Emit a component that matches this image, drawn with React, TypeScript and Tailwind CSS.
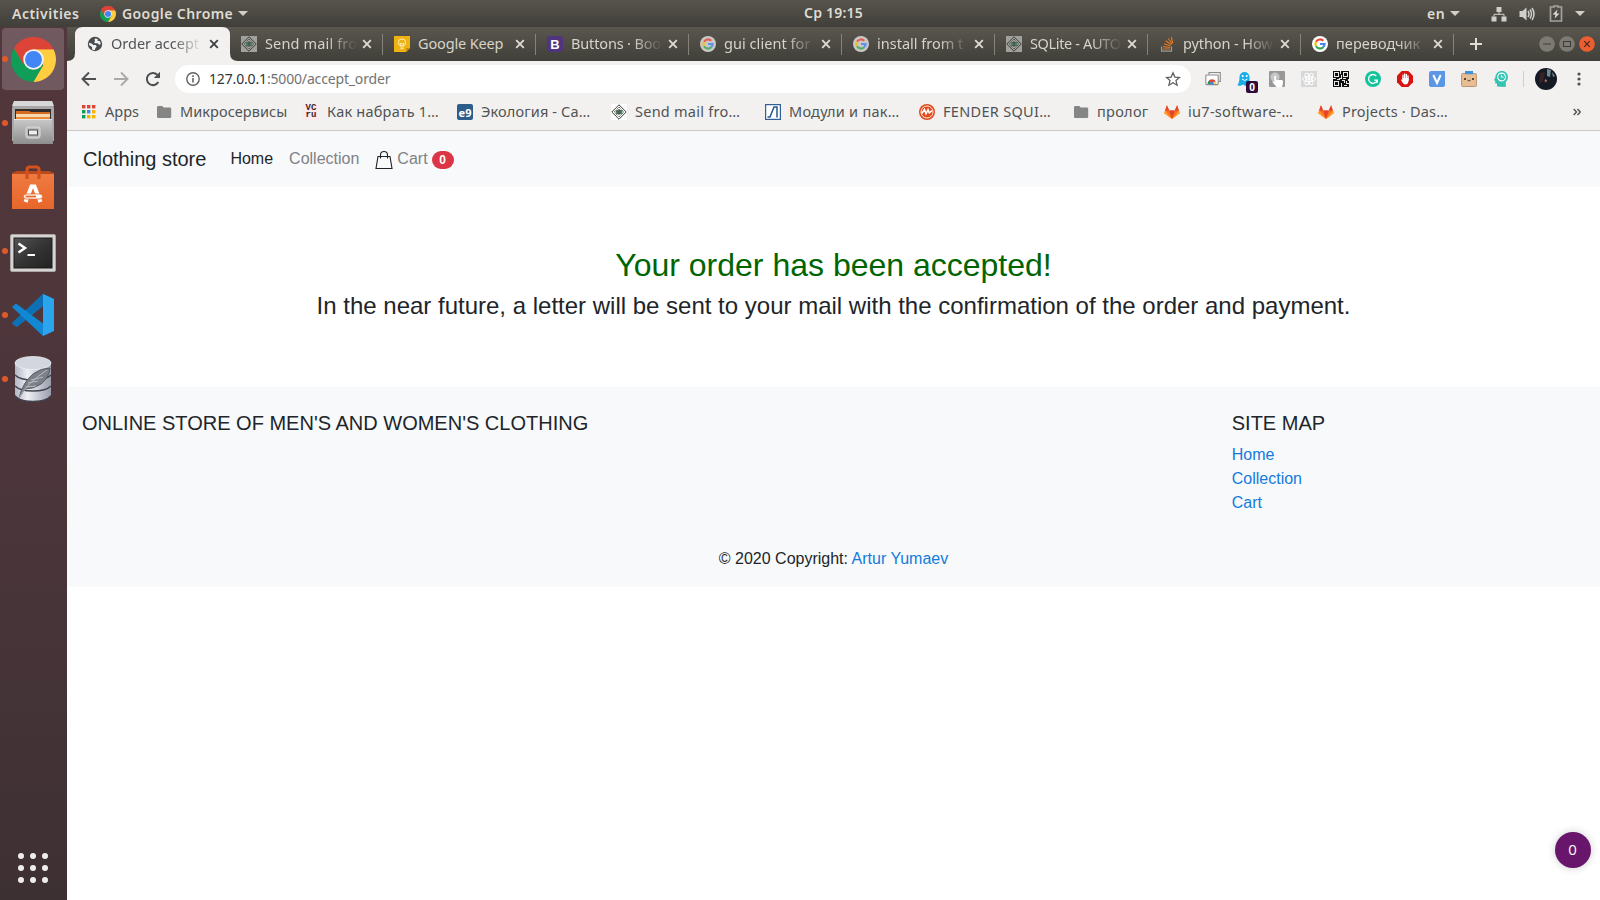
import type { ReactNode } from 'react';

const ui = "font-['Noto_Sans',sans-serif]";

function Chrome({ className }: { className: string }) {
  return (
    <svg viewBox="0 0 48 48" className={className}>
      <path d="M24 24L3.2 12A24 24 0 0 1 44.8 12Z" fill="#db4437" />
      <path d="M24 24L3.2 12A24 24 0 0 0 24 48L34.4 30Z" fill="#0f9d58" />
      <path d="M24 13H45.3A24 24 0 0 1 24 48L34.4 30Z" fill="#ffcd40" />
      <path d="M3.2 12A24 24 0 0 1 45.3 13H24L13.6 30Z" fill="#db4437" />
      <circle cx="24" cy="24" r="11" fill="#f1f1f1" />
      <circle cx="24" cy="24" r="9" fill="#4285f4" />
    </svg>
  );
}

function Google({ dim }: { dim?: boolean }) {
  return (
    <svg viewBox="0 0 16 16" className="size-4">
      <circle cx="8" cy="8" r="8" fill={dim ? '#c9c8c5' : '#fff'} />
      <g fill="none" strokeWidth="2.2" opacity={dim ? 0.8 : 1}>
        <path d="M11.3 4.8A4.6 4.6 0 0 0 4 5.8" stroke="#ea4335" />
        <path d="M4 5.8A4.6 4.6 0 0 0 4 10.2" stroke="#fbbc05" />
        <path d="M4 10.2A4.6 4.6 0 0 0 11 11.4" stroke="#34a853" />
        <path d="M11 11.4A4.6 4.6 0 0 0 12.6 8H8" stroke="#4285f4" />
      </g>
    </svg>
  );
}

function Diamond({ bg, fg = '#3c3f3e' }: { bg: string; fg?: string }) {
  return (
    <svg viewBox="0 0 16 16" className="size-4">
      <rect width="16" height="16" fill={bg} />
      <path d="M8 .8L15.2 8L8 15.2L.8 8Z" fill="none" stroke={fg} />
      <path d="M8 3L13 8L8 13L3 8Z" fill="none" stroke={fg} strokeWidth=".8" strokeDasharray="1.4 .7" />
      <ellipse cx="8" cy="8" rx="3.5" ry="2.5" fill="#5a8a6c" />
      <path d="M5 7h6M5.5 9.2h5M8 5v6" stroke={fg} strokeWidth=".7" />
    </svg>
  );
}

const Globe = () => (
  <svg viewBox="0 0 16 16" className="size-4">
    <circle cx="8" cy="8" r="7.2" fill="#4a4d50" />
    <path d="M8.2 2.4l2.6.5-.4 1.5 2.8 1.2.5 2.6-1.6.6-1.4-1.5H8.3L7 6.4l1.2-1.5L7.4 4z" fill="#f2f1f0" />
    <path d="M1.9 7l2.3.2L6.4 9l2.3.1 1 1.5-1.5 1.8-.4 1.8-2.7-.7L5 11 2.3 9.2z" fill="#f2f1f0" />
  </svg>
);

const Keep = () => (
  <svg viewBox="0 0 16 16" className="size-4">
    <path d="M0 0H16V12L12 16H0Z" fill="#eeb211" />
    <path d="M12 16V12H16Z" fill="#c98f00" />
    <circle cx="8" cy="6.5" r="3.6" fill="none" stroke="#fbeebd" strokeWidth="1" />
    <path d="M6.3 11h3.4M6.5 12.6h3M7 9.6l-.8-2.4L8 7.9 9.8 7.2 9 9.6" fill="none" stroke="#fbeebd" strokeWidth=".9" />
  </svg>
);

const Boot = () => (
  <span className="flex size-4 items-center justify-center rounded-[3px] bg-[#51347f] font-['Liberation_Sans',sans-serif] text-[13px] leading-none font-bold text-white">B</span>
);

const Stack = () => (
  <svg viewBox="0 0 16 16" className="size-4">
    <path d="M2.6 10.5V15.2H12.5V10.5" fill="none" stroke="#9b9a96" strokeWidth="1.3" />
    <path d="M4 13h7M4.2 10.6l7 .9M5 7.8l6.5 2.1M6.7 4.7l5.6 4M9.3 2.5l3.9 5.4M12.3 1l1.5 6" stroke="#e87922" strokeWidth="1.1" />
  </svg>
);

const Gitlab = () => (
  <svg viewBox="0 0 16 16" className="size-4">
    <path d="M8 15L.2 9.2 2.9 1.2 5.2 6.5H10.8L13.1 1.2 15.8 9.2Z" fill="#fc6d26" />
    <path d="M8 15L5.2 6.5H10.8Z" fill="#e24329" />
    <path d="M2.9 1.2L5.2 6.5H1.1ZM13.1 1.2L10.800 6.5H14.9Z" fill="#e24329" />
    <path d="M8 15L.2 9.2 1.1 6.5ZM8 15L15.8 9.2 14.9 6.5Z" fill="#fca326" />
  </svg>
);

const Folder = () => (
  <svg viewBox="0 0 16 16" className="size-4">
    <path d="M2 2H6.2L7.7 3.6H14A1.2 1.2 0 0 1 15.2 4.8V12.8A1.2 1.2 0 0 1 14 14H2.2A1.2 1.2 0 0 1 1 12.8V3.2A1.2 1.2 0 0 1 2 2Z" fill="#858585" />
  </svg>
);

const fade = '[mask-image:linear-gradient(to_right,black_62px,transparent_92px)]';

const tabs: { icon: ReactNode; text: string; cls: string }[] = [
  { icon: <Globe />, text: 'Order accept', cls: `tracking-[-0.02px] ${fade}` },
  { icon: <Diamond bg="#a1a09b" />, text: 'Send mail fro', cls: `tracking-[0.15px] ${fade}` },
  { icon: <Keep />, text: 'Google Keep', cls: 'tracking-[-0.15px]' },
  { icon: <Boot />, text: 'Buttons · Boo', cls: `-tracking-[0.15px] ${fade}` },
  { icon: <Google dim />, text: 'gui client for', cls: `tracking-[0.05px] ${fade}` },
  { icon: <Google dim />, text: 'install from t', cls: `tracking-[0px] ${fade}` },
  { icon: <Diamond bg="#a1a09b" />, text: 'SQLite - AUTO', cls: `tracking-[-0.35px] ${fade}` },
  { icon: <Stack />, text: 'python - How', cls: `tracking-[-0.1px] ${fade}` },
  { icon: <Google />, text: 'переводчик', cls: `tracking-[0.05px] ${fade}` },
];

function Tab({ icon, text, cls, active }: { icon: ReactNode; text: string; cls: string; active: boolean }) {
  return (
    <div className={`relative flex h-[34px] w-[153px] shrink-0 items-center pl-[11px] ${active ? 'text-[#505354]' : 'text-[#d6d3cb]'}`}>
      {active && (
        <svg viewBox="0 0 171 34" className="absolute top-0 -left-[10px] h-[34px] w-[171px]">
          <path d="M0 34Q8 34 8 26V8Q8 0 16 0H155Q163 0 163 8V26Q163 34 171 34Z" fill="#f2f1f0" />
        </svg>
      )}
      <span className={`relative ${active ? '-ml-px' : ''}`}>{icon}</span>
      <span className={`relative ml-2 w-[92px] pb-[2px] text-[14.5px] leading-5 whitespace-nowrap ${cls}`}>{text}</span>
      <svg viewBox="0 0 10 10" className={`relative size-[10px] ${active ? 'ml-[6px]' : 'ml-[5px]'}`}>
        <path d="M1.2 1.2L8.8 8.8M8.8 1.2L1.2 8.8" stroke={active ? '#3f4244' : '#dddad2'} strokeWidth="1.9" />
      </svg>
      {!active && <i className="absolute top-[7px] right-0 h-[21px] w-px bg-[#85827a]" />}
    </div>
  );
}

function Bookmark({ icon, text, w, cls = '' }: { icon: ReactNode; text: string; w: string; cls?: string }) {
  return (
    <div className={`flex shrink-0 items-center gap-2 whitespace-nowrap ${w}`}>
      {icon}
      <span className={`pb-px ${cls}`}>{text}</span>
    </div>
  );
}

const AppsIcon = () => (
  <svg viewBox="0 0 14 14" className="mr-px size-[14px]">
    {['#db4437', '#db4437', '#db4437', '#0f9d58', '#4285f4', '#f4b400', '#0f9d58', '#f4b400', '#f4b400'].map((c, i) => (
      <rect key={i} x={(i % 3) * 5} y={Math.floor(i / 3) * 5} width="3.4" height="3.4" fill={c} />
    ))}
  </svg>
);

const Vc = () => (
  <span className="flex size-4 flex-col items-center justify-center bg-[#fbe9ec] font-['Liberation_Mono',monospace] text-[9px] leading-[7px] font-bold text-[#3a2326]">
    <span>VC</span>
    <span>ru</span>
  </span>
);

const E9 = () => (
  <span className="flex size-4 items-center justify-center rounded-[2px] bg-[#2d5d8b] text-[11px] leading-none font-bold text-white">e9</span>
);

const Modules = () => (
  <svg viewBox="0 0 16 16" className="size-4">
    <rect x=".6" y=".6" width="14.8" height="14.8" fill="#fff" stroke="#2f5f94" strokeWidth="1.2" />
    <path d="M2.500 13H5L9 3H12V13.5" fill="none" stroke="#24588f" strokeWidth="1.5" />
  </svg>
);

const Fender = () => (
  <svg viewBox="0 0 16 16" className="size-4">
    <circle cx="8" cy="8" r="8" fill="#e04a1c" />
    <circle cx="8" cy="8" r="6" fill="none" stroke="#fff" strokeWidth=".9" />
    <path d="M2.8 9.5L5.5 5.5L7 9.8L9 5.8L10.3 9L13 6.5" fill="none" stroke="#fff" strokeWidth="1.6" />
  </svg>
);

const Extensions = () => (
  <div className="flex items-center gap-4">
    <svg viewBox="0 0 16 16" className="size-4">
      <path d="M4 5V1.5H15.3V10.5H13" fill="#eee" stroke="#8d8d8d" strokeWidth="1.1" />
      <rect x=".8" y="4" width="12.4" height="9.6" rx=".8" fill="#fff" stroke="#8d8d8d" strokeWidth="1.1" />
      <path d="M2.5 13A4.5 4.5 0 0 1 4.2 9.4L7 13Z" fill="#0f9d58" />
      <path d="M3.3 10.4A4.5 4.5 0 0 1 10.8 10.2L7 12Z" fill="#db4437" />
      <path d="M10.8 10.2A4.5 4.5 0 0 1 11.5 13H7Z" fill="#ffcd40" />
      <circle cx="7" cy="12.4" r="1.7" fill="#4285f4" />
    </svg>
    <span className="relative">
      <svg viewBox="0 0 16 16" className="size-4">
        <path d="M2.5 6A5 5 0 0 1 12.5 6V14L10.5 13 8.5 15 6 13.5 3 15 .3 14.2Q2.5 12 2.5 6Z" fill="#16aee8" />
        <circle cx="5.7" cy="5" r="1.1" fill="#fff" />
        <circle cx="9.7" cy="5" r="1.1" fill="#fff" />
        <path d="M5 8Q7.7 11 10.4 8" stroke="#fff" fill="none" />
      </svg>
      <span className="absolute top-[10px] left-[9px] flex h-3 w-3 items-center justify-center rounded-[2px] bg-[#300a38] text-[10px] leading-none font-bold text-white">0</span>
    </span>
    <svg viewBox="0 0 16 16" className="size-4">
      <rect width="16" height="16" rx="1" fill="#989898" />
      <circle cx="6" cy="6" r="4.6" fill="#c5c5c5" />
      <path d="M5.3 5Q6.2 4 7 5V9H13Q14.5 9.5 14 12L13 16H7.5L3.3 11Q4 9.5 5.3 10.8Z" fill="#fff" />
    </svg>
    <svg viewBox="0 0 16 16" className="size-4">
      <rect width="16" height="16" fill="#d8d8d8" />
      <g fill="none" stroke="#fff" strokeWidth="1">
        <ellipse cx="8" cy="8" rx="6.5" ry="2.5" />
        <ellipse cx="8" cy="8" rx="6.5" ry="2.5" transform="rotate(60 8 8)" />
        <ellipse cx="8" cy="8" rx="6.5" ry="2.5" transform="rotate(120 8 8)" />
      </g>
      <circle cx="8" cy="8" r="1.4" fill="#fff" />
    </svg>
    <svg viewBox="0 0 16 16" className="size-4" shapeRendering="crispEdges">
      <rect width="16" height="16" fill="#111" />
      <path d="M1.5 1.5h4v4h-4zM10.5 1.5h4v4h-4zM1.5 10.5h4v4h-4z" fill="none" stroke="#e8e8e8" strokeWidth="1" />
      <path d="M7.5 0V3M8.500 4V7H6M0 7.5H3M4 8.500H7M10 7.500H13M15.500 8V10M8.500 9.500H11V12M8.500 12V15.5M13.500 10V12.5H15.5M11 14.500H14" stroke="#e8e8e8" strokeWidth="1" fill="none" />
    </svg>
    <svg viewBox="0 0 16 16" className="size-4">
      <circle cx="8" cy="8" r="8" fill="#15c39a" />
      <path d="M11.3 5A4.4 4.4 0 1 0 12.2 9.2H9.2M12.2 9.2V12" fill="none" stroke="#fff" strokeWidth="1.3" />
    </svg>
    <svg viewBox="0 0 16 16" className="size-4">
      <path d="M4.7 0H11.3L16 4.7V11.3L11.3 16H4.7L0 11.3V4.7Z" fill="#d9130f" />
      <path d="M6 8V4.2M7.7 8V3M9.4 8V3.4M11 9V4.8" stroke="#fff" strokeWidth="1.3" strokeLinecap="round" />
      <path d="M5.4 7H11.6V10Q11 13.5 8.3 13.5Q6.3 13.5 4.3 9.5Q3.8 8.3 5.4 8.7Z" fill="#fff" />
    </svg>
    <svg viewBox="0 0 16 16" className="size-4">
      <path d="M1.5 0H16V14.5L14.5 16H1.5L0 14.5V1.5Z" fill="#5b97e5" />
      <path d="M4.3 4L8 12L11.7 4" fill="none" stroke="#fff" strokeWidth="2" />
    </svg>
    <svg viewBox="0 0 16 16" className="size-4">
      <rect x=".6" y="2.5" width="14.8" height="13" rx="1" fill="#e8bd91" stroke="#b99672" />
      <rect x="4" y="0" width="8" height="3.200" fill="#3b94dd" />
      <circle cx="4" cy="8" r="1" fill="#222" />
      <circle cx="12" cy="8" r="1" fill="#222" />
      <path d="M6.5 9.2Q7.3 10.4 8 9.2Q8.7 10.4 9.5 9.2" fill="none" stroke="#222" strokeWidth=".9" />
    </svg>
    <svg viewBox="0 0 16 16" className="size-4">
      <path d="M4 15.5V12.5H2.2V9.8L1 9.2L2.3 6.5A6.2 6.2 0 0 1 15 6Q15 9 12.800 11V16Z" fill="#34c3b0" />
      <circle cx="8.600" cy="6" r="3.9" fill="none" stroke="#fff" strokeWidth="1.1" />
      <path d="M8.400 3.8V6.2H10.5" fill="none" stroke="#fff" />
    </svg>
  </div>
);

const Files = () => (
  <svg viewBox="0 0 44 46" className="h-[46px] w-11">
    <defs>
      <linearGradient id="cab" x1="0" y1="0" x2="0" y2="1"><stop offset="0" stopColor="#c9c9c9" /><stop offset="1" stopColor="#8e8e8e" /></linearGradient>
    </defs>
    <path d="M3 1H41L43 8V41H1V8Z" fill="#a7a7a7" />
    <path d="M3 1H41L43 6H1Z" fill="#d8d8d8" />
    <path d="M4 9H40V20H4Z" fill="#302d2c" />
    <path d="M5 11H18L20 12H39V20H5Z" fill="#d66b22" />
    <path d="M5 14H39V17H5Z" fill="#f7d9b2" />
    <path d="M5 17H39V20H5Z" fill="#ec8a35" />
    <path d="M3 19H41L42 44H2Z" fill="url(#cab)" />
    <path d="M3 19.5H41" stroke="#e6e6e6" />
    <rect x="15" y="27" width="14" height="11" rx="2" fill="#bbb" stroke="#ddd" />
    <rect x="17.5" y="30" width="9" height="5" fill="#eee" stroke="#4b4b4b" />
  </svg>
);

const Software = () => (
  <svg viewBox="0 0 44 46" className="h-[46px] w-11">
    <defs>
      <linearGradient id="bag" x1="0" y1="0" x2="0" y2="1"><stop offset="0" stopColor="#ee7a42" /><stop offset="1" stopColor="#e8662a" /></linearGradient>
    </defs>
    <path d="M1 8L6 6H38L43 8V10H1Z" fill="#b84a1b" />
    <rect x="1" y="9" width="42" height="35" fill="url(#bag)" />
    <path d="M16 14V5Q16 2 19 2H25Q28 2 28 5V14" fill="none" stroke="#d4511c" strokeWidth="3.2" />
    <path d="M14.500 37L20.500 21.500H23.500L29.500 37" fill="none" stroke="#fff" strokeWidth="4" />
    <rect x="12.500" y="29" width="19" height="5" rx="2.500" fill="#fff" stroke="#e8662a" strokeWidth=".8" />
    <path d="M14.500 31.500H25" stroke="#e8662a" strokeWidth="1.800" />
  </svg>
);

const Terminal = () => (
  <svg viewBox="0 0 46 38" className="h-[38px] w-[46px]">
    <defs>
      <linearGradient id="term" x1="0" y1="0" x2="1" y2="1"><stop offset="0" stopColor="#555" /><stop offset=".5" stopColor="#343434" /><stop offset="1" stopColor="#222" /></linearGradient>
    </defs>
    <rect x=".5" y=".5" width="45" height="37" rx="1.500" fill="#d6d4d2" stroke="#aaa6a5" />
    <rect x="4" y="4" width="38" height="30" fill="url(#term)" stroke="#1b1b1b" />
    <path d="M8.500 9.500L15 14L8.500 18.500" fill="none" stroke="#fff" strokeWidth="2.500" />
    <path d="M17.500 21H25" stroke="#fff" strokeWidth="2" />
  </svg>
);

const Code = () => (
  <svg viewBox="0 0 44 44" className="size-11">
    <path d="M1 30L32 1L43 6V13L32 13L6 34Z" fill="#0f76bd" />
    <path d="M1 30L5 34L32 13V1L11 21Z" fill="#0d70b5" />
    <path d="M1 14L5 10.500L34 32L32 43Z" fill="#1288d4" />
    <path d="M32 1L43 6V38L32 43Z" fill="#2ba5ee" />
  </svg>
);

const Sqlite = () => (
  <svg viewBox="0 0 38 48" className="h-12 w-[38px]">
    <defs>
      <linearGradient id="cyl" x1="0" y1="0" x2="1" y2="0"><stop offset="0" stopColor="#b4b6c4" /><stop offset=".35" stopColor="#eeeff5" /><stop offset="1" stopColor="#9a9dac" /></linearGradient>
    </defs>
    <path d="M1 8V40Q5 46 19 46Q33 46 37 40V8Z" fill="url(#cyl)" />
    <ellipse cx="19" cy="8" rx="18" ry="6.500" fill="#d3d5df" stroke="#eceef4" strokeWidth=".8" />
    <path d="M1 20Q6 25 19 25Q32 25 37 20M1 31Q6 36 19 36Q32 36 37 31M1 41Q6 46.500 19 46.500Q32 46.500 37 41" fill="none" stroke="#41454f" strokeWidth="1.500" />
    <path d="M5 43Q9 27 19 19Q27 13 36 13Q35 23 27 29Q20 34 11 34Z" fill="#7b7f88" stroke="#575b63" />
    <path d="M5 43Q13 28 33 15M14 28L24 26M17 25L29 22M12 32L22 31" fill="none" stroke="#b8bbc4" strokeWidth="1" />
  </svg>
);

function DockItem({ children, active, dot = true }: { children: ReactNode; active?: boolean; dot?: boolean }) {
  return (
    <div className="relative flex h-16 w-[67px] items-center pl-[2px]">
      <div className={`flex h-[62px] w-[62px] items-center justify-center rounded-[4px] ${active ? 'bg-[#705a5f]' : ''}`}>{children}</div>
      {dot && <i className="absolute top-[29px] left-[2px] size-[6px] rounded-full bg-[#e1582b]" />}
    </div>
  );
}

const Caret = () => <i className="block h-0 w-0 border-x-[5px] border-t-[5px] border-x-transparent border-t-[#d0cfca]" />;

export default function App() {
  return (
    <div className={`flex h-[900px] w-[1600px] flex-col overflow-hidden bg-white ${ui}`}>
      <header className="grid h-[27px] shrink-0 grid-cols-3 items-center bg-linear-to-b from-[#57544c] to-[#413f3a] text-[14px] font-semibold text-[#dfdbd2]">
        <div className="flex items-center pl-3">
          <span className="w-[88px] tracking-[0.5px]">Activities</span>
          <Chrome className="size-4" />
          <span className="mr-[5px] ml-[6px] w-[111px] tracking-[0.4px] whitespace-nowrap">Google Chrome</span>
          <Caret />
        </div>
        <div className="pb-[2px] pl-[67px] text-center tracking-[0.2px]">Ср 19:15</div>
        <div className="flex items-center justify-end pr-[15px]">
          <span className="mr-[5px] tracking-[0.4px]">en</span>
          <Caret />
          <svg viewBox="0 0 16 16" className="ml-[31px] size-4" fill="#d0cfca">
            <path d="M5.500 1h5v5h-5zM0.500 10.500h5v5h-5zM10.500 10.500h5v5h-5z" />
            <path d="M8 6V8.300M3 10.500V8.300H13V10.500" fill="none" stroke="#d0cfca" />
          </svg>
          <svg viewBox="0 0 16 16" className="ml-3 size-4" fill="#d0cfca">
            <path d="M.5 5H3.500L7.500 1.500V14.500L3.500 11H.5Z" />
            <path d="M9 5Q11 8 9 11M11 3.500Q14 8 11 12.500M13 2Q17 8 13 14" fill="none" stroke="#d0cfca" strokeWidth="1.500" />
          </svg>
          <svg viewBox="0 0 14 17" className="ml-[14px] h-[17px] w-[14px]">
            <path d="M5 2V1H9V2H12.500V16H1.500V2Z" fill="none" stroke="#a3a29c" strokeWidth="1.700" />
            <path d="M8.500 4.500L3.500 9.500H6.500L5.500 13.500L10.500 8.500H7.500Z" fill="#deddda" />
          </svg>
          <span className="ml-3"><Caret /></span>
        </div>
      </header>

      <div className="flex min-h-0 flex-1">
        <aside className="flex w-[67px] shrink-0 flex-col bg-linear-to-b from-[#52373c] via-[#4c363b] to-[#3d3033]">
          <DockItem active><Chrome className="size-[45px]" /></DockItem>
          <DockItem><Files /></DockItem>
          <DockItem dot={false}><span className="pt-px"><Software /></span></DockItem>
          <DockItem><span className="pt-[3px]"><Terminal /></span></DockItem>
          <DockItem><Code /></DockItem>
          <DockItem><Sqlite /></DockItem>
          <div className="mt-auto grid grid-cols-3 gap-[6px] self-start pb-[17px] pl-[18px]">
            {Array.from({ length: 9 }, (_, i) => <i key={i} className="size-[6px] rounded-full bg-[#f0eeed]" />)}
          </div>
        </aside>

        <div className="relative flex min-w-0 flex-1 flex-col">
          <div className="flex h-[34px] shrink-0 items-center bg-linear-to-b from-[#5a574f] to-[#403f39] pl-[10px]">
            {tabs.map((t, i) => <Tab key={t.text} {...t} active={i === 0} />)}
            <svg viewBox="0 0 12 12" className="ml-4 size-3"><path d="M6 0V12M0 6H12" stroke="#e0ddd5" strokeWidth="2" /></svg>
            <div className="ml-auto flex gap-1 pr-[5px]">
              <svg viewBox="0 0 16 16" className="size-4"><circle cx="8" cy="8" r="7.800" fill="#7d7a73" /><path d="M4 8H12" stroke="#3c3b37" /></svg>
              <svg viewBox="0 0 16 16" className="size-4"><circle cx="8" cy="8" r="7.800" fill="#7d7a73" /><rect x="4.500" y="5.500" width="7" height="5" fill="none" stroke="#3c3b37" /></svg>
              <svg viewBox="0 0 16 16" className="size-4"><circle cx="8" cy="8" r="7.800" fill="#ec5e30" /><path d="M5.200 5.200L10.800 10.800M10.800 5.200L5.200 10.800" stroke="#45281d" strokeWidth="1.200" /></svg>
            </div>
          </div>

          <div className="flex h-9 shrink-0 items-center bg-[#f2f1f0] pl-[14px]">
            <svg viewBox="0 0 16 16" className="size-4" fill="none" stroke="#4d4f51" strokeWidth="1.900"><path d="M15 8H2M8 1.500L1.500 8L8 14.500" /></svg>
            <svg viewBox="0 0 16 16" className="ml-4 size-4" fill="none" stroke="#a9a9a8" strokeWidth="1.900"><path d="M1 8H14M8 1.500L14.500 8L8 14.500" /></svg>
            <svg viewBox="0 0 16 16" className="ml-4 size-4"><path d="M13.300 11A6.100 6.100 0 1 1 12.300 3.700" fill="none" stroke="#4d4f51" strokeWidth="2" /><path d="M15 .8V7H8.800Z" fill="#4d4f51" /></svg>
            <div className="ml-[14px] flex h-7 w-[1016px] items-center rounded-full bg-white pr-[10px] pl-[11px] text-[14px]">
              <svg viewBox="0 0 14 14" className="size-[14px]"><circle cx="7" cy="7" r="6.200" fill="none" stroke="#5f6163" strokeWidth="1.400" /><path d="M7 6V10.500M7 3.300V4.900" stroke="#5f6163" strokeWidth="1.600" /></svg>
              <span className="ml-[9px] pb-px tracking-[-0.16px] text-[#333]">127.0.0.1<span className="text-[#737373]">:5000/accept_order</span></span>
              <svg viewBox="0 0 16 16" className="ml-auto size-4"><path d="M8 1.800L9.900 6.100L14.500 6.500L11 9.600L12.100 14.200L8 11.700L3.900 14.200L5 9.600L1.500 6.500L6.100 6.100Z" fill="none" stroke="#5f6163" strokeWidth="1.300" /></svg>
            </div>
            <div className="ml-[14px]"><Extensions /></div>
            <i className="ml-[14px] h-4 w-px bg-[#cfcfcf]" />
            <svg viewBox="0 0 22 22" className="ml-[11px] size-[22px]">
              <circle cx="11" cy="11" r="11" fill="#151b24" />
              <path d="M12 1L16 2L15 9L12 8ZM17 4L20 8L18 9Z" fill="#6f8a93" />
              <path d="M5 5L10 4L8 13L4 16Z" fill="#3a2225" />
              <path d="M10.500 11L12 12.500L11 14.500L9.500 13Z" fill="#c9704c" />
            </svg>
            <svg viewBox="0 0 4 14" className="ml-5 h-[14px] w-1" fill="#4d4f51"><circle cx="2" cy="2" r="1.600" /><circle cx="2" cy="7" r="1.600" /><circle cx="2" cy="12" r="1.600" /></svg>
          </div>

          <div className="flex h-[34px] shrink-0 items-center border-b border-[#c9c9c8] bg-[#f2f1f0] pb-[3px] pl-[15px] text-[14.500px] text-[#505354]">
            <Bookmark icon={<AppsIcon />} text="Apps" w="w-[74px]" />
            <Bookmark icon={<Folder />} text="Микросервисы" w="w-[147px]" cls="tracking-[0.08px]" />
            <Bookmark icon={<Vc />} text="Как набрать 1…" w="w-[154px]" cls="tracking-[0.22px]" />
            <Bookmark icon={<E9 />} text="Экология - Са…" w="w-[154px]" cls="tracking-[0.15px]" />
            <Bookmark icon={<Diamond bg="#fff" />} text="Send mail fro…" w="w-[154px]" cls="tracking-[0.25px]" />
            <Bookmark icon={<Modules />} text="Модули и пак…" w="w-[154px]" cls="tracking-[0.25px]" />
            <Bookmark icon={<Fender />} text="FENDER SQUI…" w="w-[154px]" cls="tracking-[0.3px]" />
            <Bookmark icon={<Folder />} text="пролог" w="w-[91px]" cls="tracking-[0.3px]" />
            <Bookmark icon={<Gitlab />} text="iu7-software-…" w="w-[154px]" cls="tracking-[0.3px]" />
            <Bookmark icon={<Gitlab />} text="Projects · Das…" w="w-[154px]" cls="tracking-[0.2px]" />
            <svg viewBox="0 0 8 8" className="mr-[19px] ml-auto size-2" fill="none" stroke="#4d4f51" strokeWidth="1.400"><path d="M.7 1L3.500 4L.7 7M4.500 1L7.300 4L4.500 7" /></svg>
          </div>

          <div className="flex flex-1 flex-col font-['Liberation_Sans',Arial,sans-serif] text-base text-[#212529]">
            <nav className="flex h-14 shrink-0 items-center bg-[#f7f9fb] pl-4">
              <span className="mr-4 text-xl">Clothing store</span>
              <span className="px-2">Home</span>
              <span className="px-2 text-[#808285]">Collection</span>
              <span className="flex items-center px-2 text-[#808285]">
                <svg viewBox="0 0 18 20" className="mt-[2px] mr-1 h-5 w-[18px]" fill="none" stroke="#222" strokeWidth="1.100"><path d="M3 6.500H15L17 18.500H1ZM5.500 8.500V5Q5.500 1.500 9 1.500Q12.500 1.500 12.500 5V8.500" /></svg>
                Cart
                <span className="mt-[2px] ml-1 flex h-[18px] w-[22px] items-center justify-center rounded-full bg-[#dc3545] text-xs font-bold text-white">0</span>
              </span>
            </nav>
            <main className="flex h-[200px] shrink-0 flex-col items-center pt-[59px]">
              <h2 className="text-[32px] leading-[38px] text-[#006400]">Your order has been accepted!</h2>
              <h4 className="mt-[7px] text-2xl leading-[29px]">In the near future, a letter will be sent to your mail with the confirmation of the order and payment.</h4>
            </main>
            <footer className="flex h-[200px] shrink-0 flex-col bg-[#f7f9fb] pt-6">
              <div className="flex h-[119px] pl-[15px]">
                <h5 className="w-[1149.75px] text-xl leading-6">ONLINE STORE OF MEN'S AND WOMEN'S CLOTHING</h5>
                <div>
                  <h5 className="mb-2 text-xl leading-6">SITE MAP</h5>
                  <ul className="leading-6 text-[#147bdd]">
                    <li>Home</li>
                    <li>Collection</li>
                    <li>Cart</li>
                  </ul>
                </div>
              </div>
              <p className="mt-[17px] text-center leading-6">© 2020 Copyright: <span className="text-[#147bdd]">Artur Yumaev</span></p>
            </footer>
          </div>
          <div className="absolute right-[9.500px] bottom-[32px] flex size-9 items-center justify-center rounded-full bg-[#68156c] pb-px font-['Open_Sans',sans-serif] text-[15px] text-white shadow-[0_0_8px_rgba(0,0,0,0.2)]">0</div>
        </div>
      </div>
    </div>
  );
}
